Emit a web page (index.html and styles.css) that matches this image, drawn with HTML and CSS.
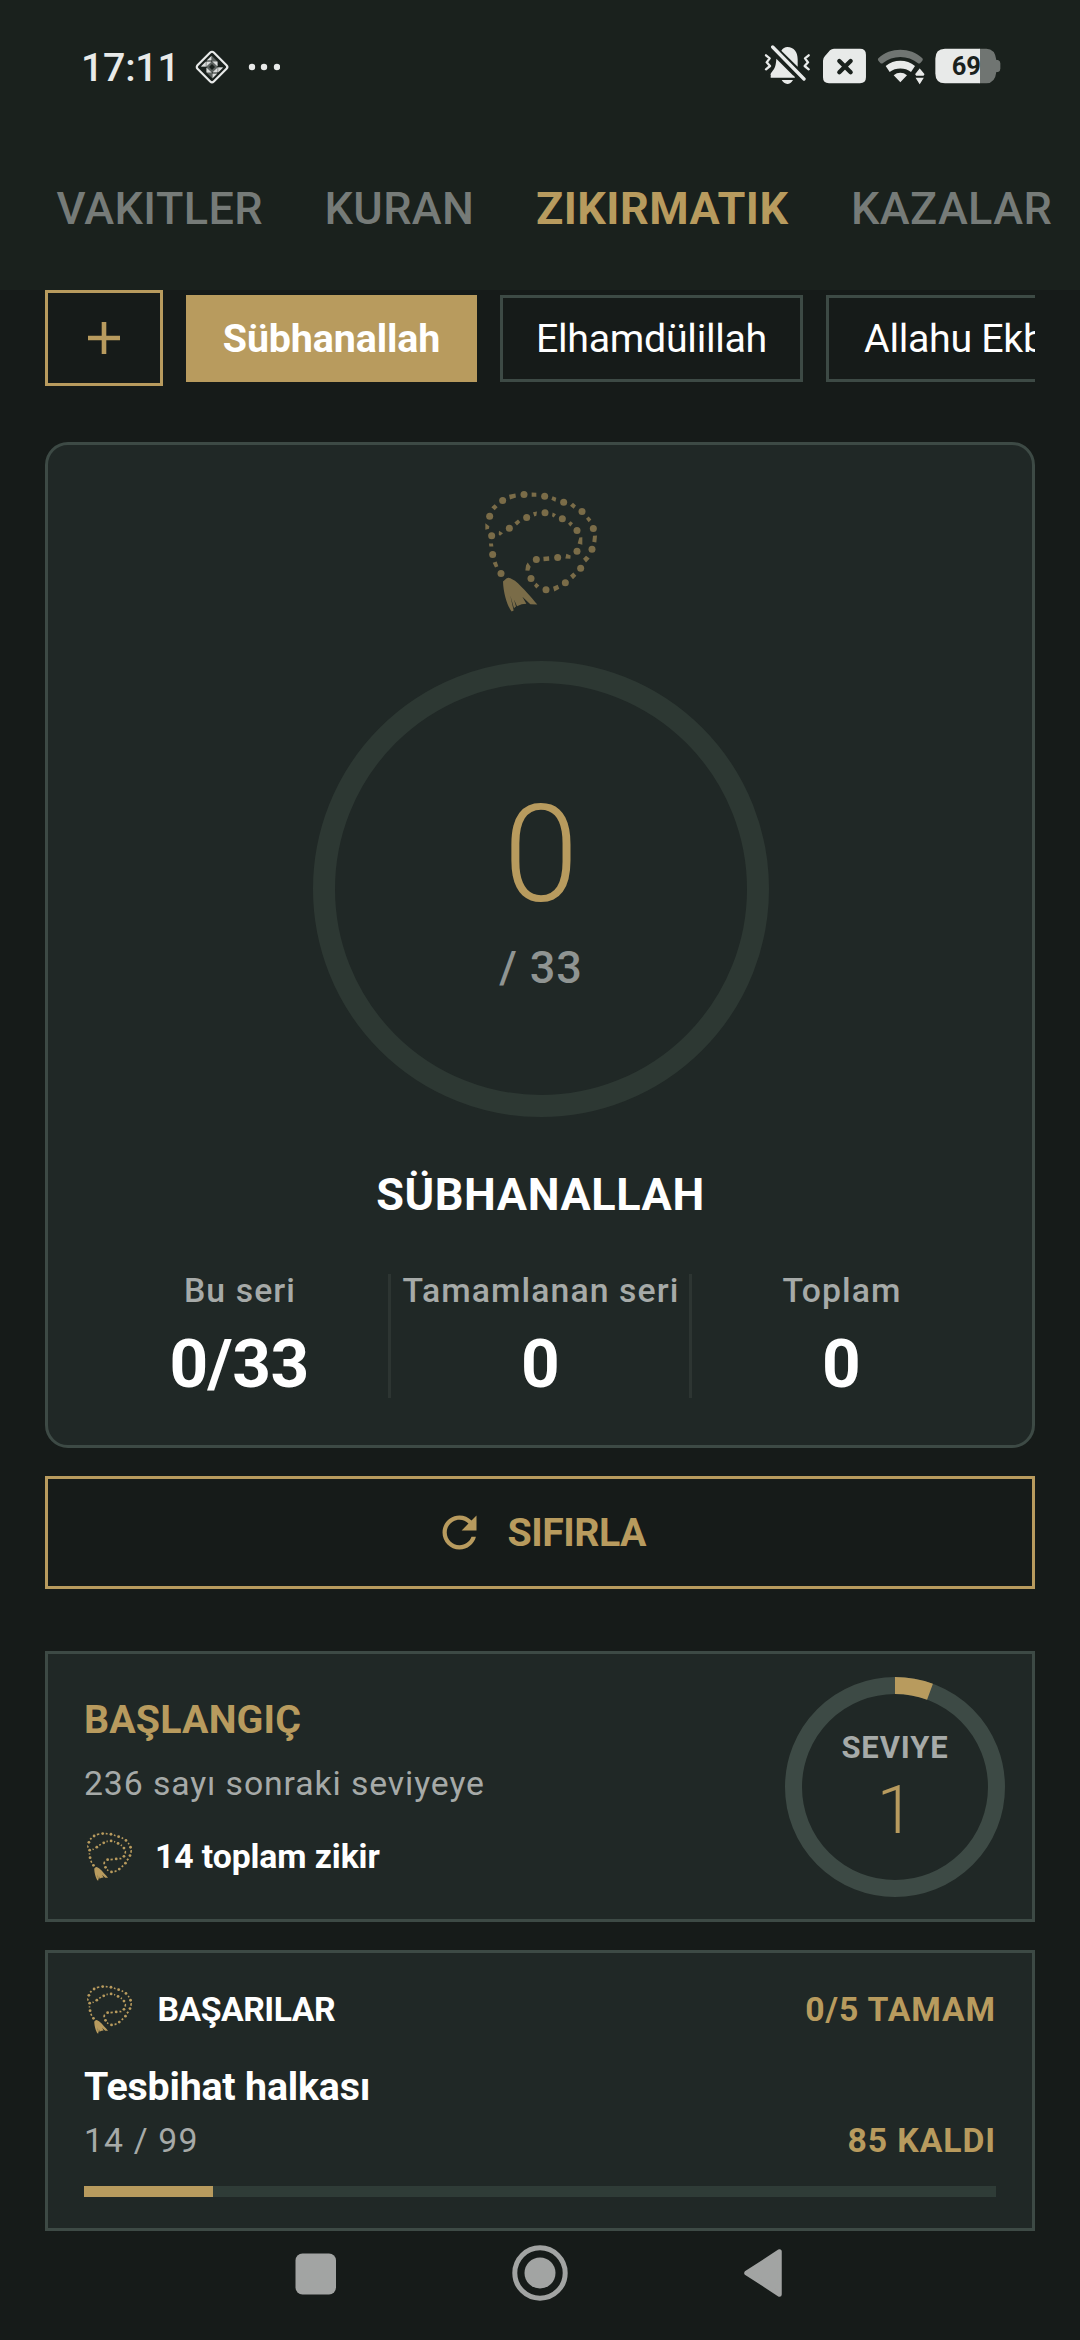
FILE: index.html
```html
<!DOCTYPE html>
<html lang="tr">
<head>
<meta charset="utf-8">
<title>Zikirmatik</title>
<link rel="stylesheet" href="styles.css">
</head>
<body>
<svg class="sprite" aria-hidden="true">
  <symbol id="tasbih" viewBox="134 94 336 362">
    <g fill="currentColor">
      <circle cx="251" cy="104" r="10.5"/><circle cx="187" cy="122" r="10.5"/><circle cx="148" cy="169" r="10.5"/>
      <circle cx="154" cy="228" r="10.5"/><circle cx="157" cy="284" r="10.5"/><circle cx="182" cy="341" r="10.5"/>
      <circle cx="313" cy="109" r="10.5"/><circle cx="370" cy="127" r="10.5"/><circle cx="425" cy="155" r="10.5"/>
      <circle cx="459" cy="206" r="10.5"/><circle cx="455" cy="268" r="10.5"/><circle cx="421" cy="325" r="10.5"/>
      <circle cx="375" cy="369" r="10.5"/><circle cx="317" cy="390" r="10.5"/><circle cx="272" cy="356" r="10.5"/>
      <circle cx="288" cy="299" r="10.5"/><circle cx="352" cy="293" r="10.5"/><circle cx="410" cy="274" r="10.5"/>
      <circle cx="410" cy="212" r="10.5"/><circle cx="366" cy="177" r="10.5"/><circle cx="314" cy="159" r="10.5"/>
      <circle cx="259" cy="173" r="10.5"/><circle cx="207" cy="205" r="10.5"/>
      <path d="M274 98l14 1v12l-14 0zM206 105l19-4 2 12-18 6zM153 142l10-9 9 9-9 9zM135 190l12 9-1 8-11 3zM146 251h12l1 9h-12zM157 309l12-4 5 14-10 4zM337 109l11 5-3 12-12-6zM389 138l9-9 9 8-7 10zM437 177l8-7 8 9-8 8zM458 228l12-1-2 21-12-2zM428 297l9-9 11 8-11 12zM389 347l10-9 9 10-10 10zM338 381l14-6 5 12-15 8zM281 378l7-9 9 8-9 9zM262 308l9 13-4 12-12-1 2-15zM309 291l17-2 1 14-17 1zM378 282l13 5-1 10-15-1zM417 233l9-1v23l-14-4zM383 192l8-8 7 6-8 10zM337 158l10 5-7 10-5-4zM278 157l12-2-2 13-6 2zM222 188l11-9 7 8-10 10zM176 213l12 7-9 8-4-4z"/>
      <path d="M189 364l9-8q6-4 12-1l14 8c26 22 50 52 67 71l-21-1-24-22 12 21q-14 0-28 7l-9-20 6 21-3 2-3 3-11-37 10 44-6 3c-11-13-25-51-26-91z"/>
    </g>
  </symbol>
</svg>

<div class="screen">
  <header class="header">
    <div class="status">
      <span class="clock">17:11</span>
      <svg class="status-app" viewBox="0 0 36 36" width="36" height="36">
        <rect x="6.5" y="6.5" width="23" height="23" rx="2.5" transform="rotate(45 18 18)" fill="none" stroke="#e8eae9" stroke-width="2.2"/>
        <path fill="#5c625f" d="M18 7l5 5v6h6l-5 5h-6v6l-5-5v-6H7l5-5h6z"/>
        <path fill="#d9dbda" d="M12.6 11.6h5V6.8zM18.4 12.4h5.2v5.2zM6.8 17.6h5v-5zM12.4 17.6v-5.2h5.2zM24.2 18.4h5l-5 5zM12.4 18.4v5.2h5.2zM18.4 24.4v5l5-5zM18.4 23.6h5.2v-5.2z"/>
        <path fill="#1a211d" d="M18 15l3 3-3 3-3-3z"/>
      </svg>
      <svg class="status-more" viewBox="0 0 32 8" width="32" height="8"><g fill="#e8eae9"><circle cx="4" cy="4" r="3.2"/><circle cx="16" cy="4" r="3.2"/><circle cx="29" cy="4" r="3.2"/></g></svg>
      <div class="status-right">
        <svg viewBox="40 45 140 126" width="46.7" height="42">
          <g fill="#e8eae9"><path d="M92 62Q99 51 110 51C130 51 141 66 141 88V110zM77 86L128 137H61Q57 132 64 125C74 114 76 102 77 86zM60 137H130L133 143H60zM93 150h34Q120 162 110 162Q99 161 93 150z"/></g>
          <g fill="none" stroke="#e8eae9" stroke-linecap="round" stroke-linejoin="round"><path stroke-width="10" d="M66 51L160 147"/><path stroke-width="7" d="M46 76l11 9-9 12 10 11-12 10M174 76l-11 9 9 12-10 11 12 10"/></g>
        </svg>
        <svg viewBox="214 45 136 126" width="45.3" height="42">
          <path fill="#e8eae9" d="M250 56H328Q346 56 346 74V142Q346 160 328 160H235Q217 160 217 142V92Q217 84 223 78L238 61Q243 56 250 56z"/>
          <path fill="none" stroke="#1a211d" stroke-width="13" stroke-linecap="round" d="M266 93l34 34M300 93l-34 34"/>
        </svg>
        <svg viewBox="380 45 146 126" width="48.7" height="42">
          <path fill="#707572" d="M384 85C420 51 480 51 516 85Q519 88 516 92L510 99Q506 102 502 99C474 75 426 75 398 99Q394 102 390 99L384 92Q381 88 384 85z"/>
          <path fill="#e8eae9" d="M406 108C430 87 470 87 494 108L482 126C464 112 436 112 418 126zM430 136C442 126 458 126 470 136L450 157z"/>
          <path fill="#e8eae9" stroke="#1a211d" stroke-width="4" d="M508 112L525 132L521 139H496L492 132zM492 141H524L508 167z"/>
        </svg>
        <svg viewBox="552 45 200 126" width="66.7" height="42">
          <path fill="#707572" d="M688 56H709Q735 56 739 90H744Q751 92 751 100V116Q751 124 744 126H739Q735 160 709 160H688z"/>
          <path fill="#e8eae9" d="M585 56H690V160H585Q556 160 556 130V86Q556 56 585 56z"/>
          <text class="battery-text" x="649" y="135" text-anchor="middle" textLength="88" lengthAdjust="spacingAndGlyphs">69</text>
        </svg>
      </div>
    </div>
    <nav class="tabs">
      <span class="tab">VAKITLER</span>
      <span class="tab">KURAN</span>
      <span class="tab tab-active">ZIKIRMATIK</span>
      <span class="tab">KAZALAR</span>
    </nav>
  </header>

  <main class="content">
    <div class="chips">
      <button class="chip-add"><svg viewBox="0 0 32 32" width="32" height="32"><path d="M16 0V32M0 16H32" stroke="currentColor" stroke-width="4.6"/></svg></button>
      <button class="chip chip-on"><span>Sübhanallah</span></button>
      <button class="chip chip-mid"><span>Elhamdülillah</span></button>
      <button class="chip chip-last"><span>Allahu Ekber</span></button>
    </div>

    <section class="counter">
      <svg class="tasbih-lg" width="112" height="121"><use href="#tasbih"/></svg>
      <div class="ring">
        <div class="ring-count">0</div>
        <div class="ring-goal">/ 33</div>
      </div>
      <h1 class="name">SÜBHANALLAH</h1>
      <div class="stats">
        <div class="stat"><span class="stat-label">Bu seri</span><span class="stat-value">0/33</span></div>
        <i class="divider"></i>
        <div class="stat"><span class="stat-label">Tamamlanan seri</span><span class="stat-value">0</span></div>
        <i class="divider"></i>
        <div class="stat"><span class="stat-label">Toplam</span><span class="stat-value">0</span></div>
      </div>
    </section>

    <button class="reset">
      <svg viewBox="0 0 24 24" width="51" height="51"><path fill="currentColor" d="M17.65 6.35C16.2 4.9 14.21 4 12 4c-4.42 0-7.99 3.58-7.99 8s3.57 8 7.99 8c3.73 0 6.84-2.55 7.73-6h-2.08c-.82 2.33-3.04 4-5.65 4-3.31 0-6-2.69-6-6s2.69-6 6-6c1.66 0 3.14.69 4.22 1.78L13 11h7V4l-2.35 2.35z"/></svg>
      <span>SIFIRLA</span>
    </button>

    <section class="card level">
      <div class="level-info">
        <h2 class="level-name">BAŞLANGIÇ</h2>
        <p class="level-next">236 sayı sonraki seviyeye</p>
        <div class="level-total"><svg class="tasbih-sm" width="45" height="49"><use href="#tasbih"/></svg><span>14 toplam zikir</span></div>
      </div>
      <div class="level-ring">
        <svg class="level-arc" viewBox="0 0 220 220" width="220" height="220">
          <circle cx="110" cy="110" r="101.5" fill="none" stroke="#3d4a45" stroke-width="17"/>
          <path d="M110 8.5A101.5 101.5 0 0 1 145 14.7" fill="none" stroke="#b89b5e" stroke-width="17"/>
        </svg>
        <span class="level-label">SEVIYE</span>
        <span class="level-value">1</span>
      </div>
    </section>

    <section class="card awards">
      <div class="row awards-head">
        <svg class="tasbih-sm" width="45" height="49"><use href="#tasbih"/></svg>
        <span class="awards-title">BAŞARILAR</span>
        <span class="gold">0/5 TAMAM</span>
      </div>
      <h3 class="award-name">Tesbihat halkası</h3>
      <div class="row"><span class="award-count">14 / 99</span><span class="gold">85 KALDI</span></div>
      <div class="bar"><div class="bar-fill" style="width:14.14%"></div></div>
    </section>
  </main>

  <footer class="navbar">
    <svg viewBox="0 0 42 42" width="42" height="42"><rect x="0.5" y="0.5" width="40.5" height="41" rx="7" fill="#a2a4a3"/></svg>
    <svg viewBox="0 0 56 56" width="56" height="56"><circle cx="28" cy="28" r="25.2" fill="none" stroke="#a2a4a3" stroke-width="5"/><circle cx="28" cy="28" r="15.5" fill="#a2a4a3"/></svg>
    <svg viewBox="0 0 38 48" width="38" height="48"><path d="M2.5 24L35.5 2.5V45.5z" fill="#a2a4a3" stroke="#a2a4a3" stroke-width="4.5" stroke-linejoin="round"/></svg>
  </footer>
</div>
</body>
</html>
```
FILE: styles.css
```css
* { box-sizing: border-box; }
body { margin: 0; background: #161b19; font-family: Roboto, "Noto Sans", sans-serif; color: #fff; }
h1, h2, h3, p { margin: 0; font-weight: inherit; }
button { font: inherit; color: inherit; background: none; padding: 0; margin: 0; border-radius: 0; }
svg { display: block; flex: none; }
.sprite { position: absolute; width: 0; height: 0; }
.screen { width: 1080px; height: 2340px; overflow: hidden; display: flex; flex-direction: column; }

.header { height: 290px; background: #1a211d; flex: none; }
.status { height: 135px; display: flex; align-items: center; padding: 0 79px 0 81px; }
.clock { font-size: 39.375px; font-weight: 500; color: #e8eae9; letter-spacing: -.25px; width: 113px; }
.status-app { margin-top: -2px; }
.status-more { margin: -2px 0 0 17.5px; }
.status-right { margin-left: auto; display: flex; margin-top: -3px; }
.status-right svg:nth-child(2) { margin-left: 11.3px; }
.status-right svg:nth-child(3) { margin-left: 10px; }
.status-right svg:nth-child(4) { margin-left: 8.6px; }
.battery-text { font: 700 78px Roboto, sans-serif; fill: #1a211d; }

.tabs { height: 147px; display: flex; align-items: center; padding-left: 56.5px; gap: 61.5px; white-space: nowrap; }
.tab { font-size: 45px; font-weight: 500; letter-spacing: .4px; color: #767b78; }
.tab-active { font-weight: 700; color: #b89b5e; letter-spacing: .45px; }
.tab-active + .tab { margin-left: 1px; }

.content { padding: 0 45px; display: flex; flex-direction: column; flex: none; }
.chips { height: 97px; display: flex; align-items: center; gap: 23px; overflow: hidden; }
.chip-add { width: 118px; height: 96px; border: 3px solid #b89b5e; color: #b89b5e; display: flex; align-items: center; justify-content: center; flex: none; align-self: flex-start; }
.chip { height: 87px; border: 3px solid #3d4a45; display: flex; align-items: center; justify-content: center; flex: none; font-size: 39.375px; letter-spacing: -.3px; white-space: nowrap; }
.chip-on { width: 291px; background: #b89b5e; border-color: #b89b5e; font-weight: 700; letter-spacing: -.1px; }
.chip-mid { width: 303px; }
.chip-last { width: 310px; justify-content: flex-start; padding-left: 35px; }

.counter { margin-top: 55px; height: 1006px; border: 3px solid #3d4a45; border-radius: 23px; background: #202826; display: flex; flex-direction: column; align-items: center; padding: 46px 42px 0; }
.tasbih-lg { color: #7a6c48; margin-left: 1px; }
.ring { margin: 49px 0 0 1px; width: 456px; height: 456px; border: 22.5px solid #2d3833; border-radius: 50%; display: flex; flex-direction: column; align-items: center; padding: 93px 0 0 1px; }
.ring-count { font-size: 135px; line-height: 158px; font-weight: 300; color: #b89b5e; }
.ring-goal { font-size: 45px; line-height: 53px; margin-top: 7px; font-weight: 500; color: #8f9492; letter-spacing: .9px; }
.name { margin-top: 51px; padding-left: 1px; font-size: 45px; line-height: 53px; font-weight: 700; letter-spacing: .6px; }
.stats { margin-top: 53px; width: 900px; display: grid; grid-template-columns: 1fr 3px 1fr 3px 1fr; }
.divider { background: #2d3532; height: 124px; }
.stat { display: flex; flex-direction: column; align-items: center; white-space: nowrap; margin-top: -3px; }
.stat-label { padding-left: 2px; font-size: 33.75px; line-height: 40px; font-weight: 500; color: #a6aaa8; letter-spacing: 1.1px; }
.stat-value { margin-top: 13px; font-size: 67.5px; line-height: 79px; font-weight: 700; letter-spacing: -.5px; }

.reset { margin-top: 28px; height: 113px; border: 3px solid #b89b5e; color: #b89b5e; display: flex; align-items: center; justify-content: center; gap: 22.5px; font-size: 39.375px; font-weight: 700; letter-spacing: -.55px; }

.card { border: 3px solid #3d4a45; background: #202826; }
.level { margin-top: 62px; height: 271px; padding: 0 27px 0 36px; display: flex; align-items: center; justify-content: space-between; }
.level-info { display: flex; flex-direction: column; padding-top: 5px; }
.level-name { font-size: 39.375px; line-height: 46px; font-weight: 700; color: #b89b5e; letter-spacing: .15px; }
.level-next { margin-top: 21px; font-size: 33.75px; line-height: 40px; color: #a6aaa8; letter-spacing: .9px; }
.level-total { margin-top: 28px; display: flex; align-items: center; gap: 23px; font-size: 33.75px; font-weight: 700; letter-spacing: -.1px; }
.tasbih-sm { color: #b89b5e; margin-left: 3px; }
.level-ring { display: grid; width: 220px; height: 220px; justify-items: center; grid-template: 1fr / 1fr; }
.level-ring > * { grid-area: 1 / 1; }
.level-label { font-size: 30.94px; line-height: 36px; margin-top: 53px; font-weight: 700; color: #a6aaa8; letter-spacing: .9px; }
.level-value { font-size: 67.5px; line-height: 79px; margin-top: 93px; padding-left: 1px; font-weight: 300; color: #b89b5e; }

.awards { margin-top: 28px; height: 281px; padding: 32px 36px 0; }
.row { display: flex; align-items: center; justify-content: space-between; font-size: 33.75px; line-height: 40px; }
.awards-title { margin: 0 auto 0 25.5px; font-weight: 700; letter-spacing: -.5px; }
.gold { color: #b89b5e; font-weight: 700; letter-spacing: .9px; }
.award-name { margin-top: 30px; font-size: 39.375px; line-height: 46px; font-weight: 700; letter-spacing: -.2px; }
.award-count { color: #a6aaa8; letter-spacing: 1.15px; }
.award-name + .row { margin-top: 11px; }
.bar { margin-top: 25px; height: 11px; background: #2f3c37; }
.bar-fill { height: 100%; background: #b89b5e; }

.navbar { height: 109px; display: flex; align-items: flex-start; padding: 14px 0 0 295px; }
.navbar svg:nth-child(1) { margin-top: 8px; }
.navbar svg:nth-child(2) { margin-left: 174.5px; }
.navbar svg:nth-child(3) { margin: 4px 0 0 176.5px; }
```
